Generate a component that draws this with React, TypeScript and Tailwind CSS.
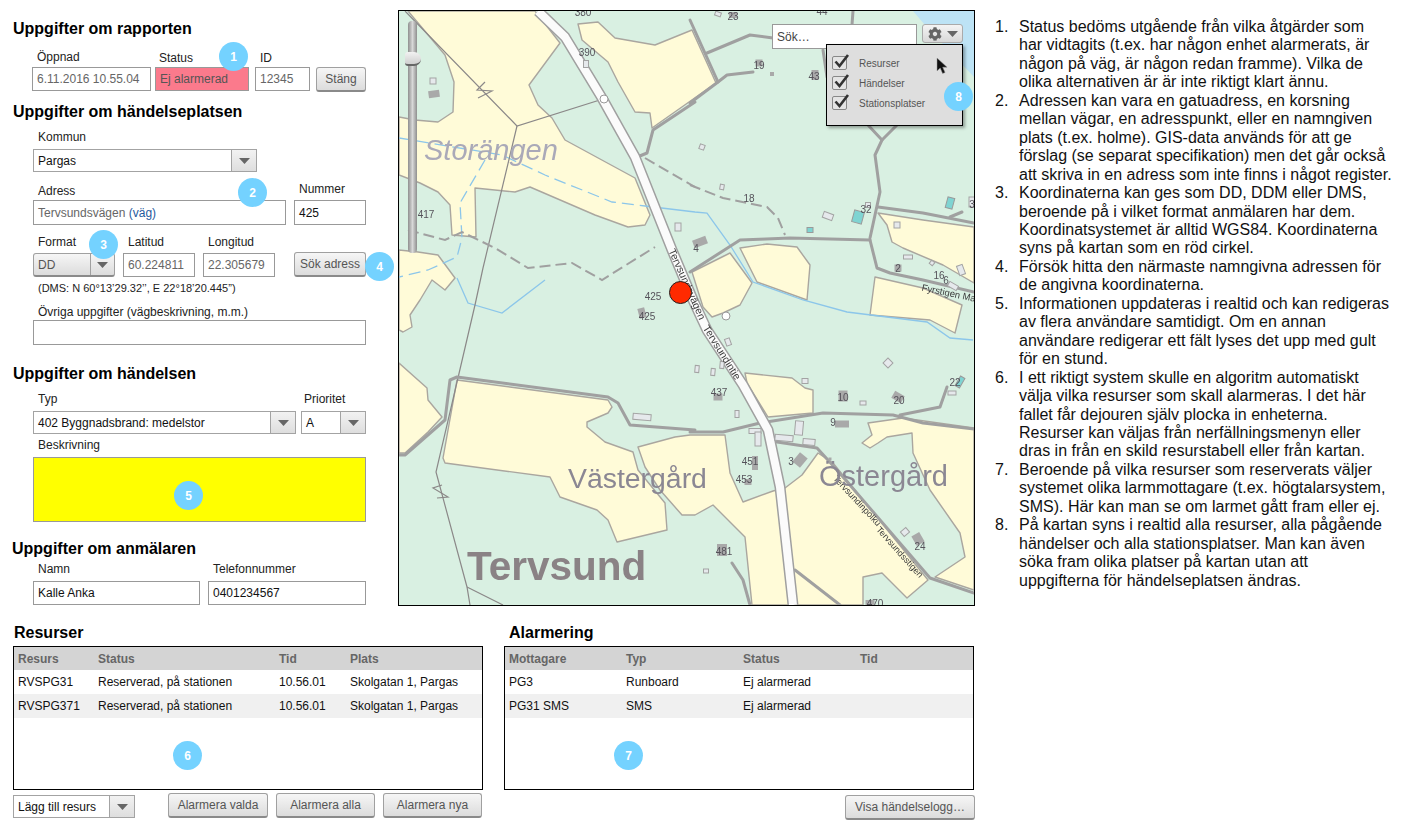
import React from 'react';
import { FaCog } from 'react-icons/fa';

const fields = [
  '408,11 445,55 454,82 453,112 438,122 415,120 399,117 399,175 420,183 438,192 450,205 452,235 476,237 475,188 515,192 530,187 595,215 628,227 645,225 650,215 635,178 565,140 552,118 538,105 529,85 560,43 535,11',
  '578,24 598,22 615,38 655,45 692,30 716,83 652,128 650,113 635,112 618,82 608,62 582,40',
  '399,250 418,252 438,255 455,278 445,290 432,280 420,300 410,315 412,327 403,332 399,330',
  '399,363 427,388 428,400 442,417 428,432 405,453 399,453',
  '457,380 608,400 612,407 608,413 587,422 587,427 605,442 633,452 638,470 665,503 667,530 617,542 608,520 597,510 560,497 550,477 445,463 443,458',
  '638,447 675,437 690,435 725,435 730,473 743,502 773,491 785,488 802,475 818,453 833,463 928,580 907,598 882,573 863,577 863,605 752,605 745,537 713,505 695,515 682,515 660,490 645,467',
  '868,423 903,418 974,428 974,590 935,577 965,557 960,533 930,490 913,453 912,433 887,437 878,443 870,448 862,443 872,435',
  '745,373 792,378 805,388 813,390 813,413 768,417 747,383',
  '692,272 730,253 752,283 740,305 723,313 712,317 703,307',
  '740,248 767,244 797,247 810,265 807,300 757,282',
  '878,213 923,220 974,227 974,283 943,265 903,248 892,242 887,225',
  '875,277 923,288 962,305 955,333 930,320 870,315',
];

const roads = [
  '707,53 750,35 773,38',
  '690,20 718,82',
  '690,103 718,82 727,75 753,72',
  '853,11 852,25',
  '823,50 827,77',
  '868,125 882,140 897,125',
  '882,140 875,155 880,192 870,238',
  '878,207 923,213 974,223',
  '950,217 962,212',
  '690,272 740,240 790,238 870,240',
  '870,240 877,268 890,273 923,280 974,292',
  '635,158 647,153 653,130 695,102',
  '399,455 405,455 445,420 450,380 457,377 608,397 618,403 630,425 695,430',
  '690,432 723,432 760,423 823,413 893,415 923,423 974,429',
  '900,415 940,407 947,387',
  '777,442 817,448 837,470 930,578 974,593',
  '732,563 743,580 750,605',
  '795,570 840,605',
];

const tracks = [
  '645,158 695,187',
  '690,185 723,198 767,207 778,218 785,235',
  '408,230 445,240 462,232 495,248 528,268 572,263 602,280 655,247',
];

const powerLines = [
  '405,11 517,126 603,99',
  '517,126 483,268 475,305 436,472 467,587 470,605',
  '467,587 503,605',
  '485,82 477,90 492,91 478,98',
  '442,485 433,488 448,497 437,498',
];

const streams = [
  { points: '399,138 502,155 545,175 612,202 645,206', dashed: true },
  { points: '485,160 460,203 462,238 457,257 428,270 399,277', dashed: true },
  { points: '645,206 695,212 707,213 730,245 753,282 803,300 847,312 927,322 950,338 973,340', dashed: false },
  { points: '457,278 468,303 502,313 545,280', dashed: false },
];

type Kind = 'gray' | 'pale' | 'teal';

const buildings: [number, number, number, number, number, Kind][] = [
  [433, 81, 6, 6, 0, 'pale'],
  [434, 94, 11, 7, -8, 'gray'],
  [586, 64, 5, 7, 0, 'pale'],
  [678, 227, 6, 8, 0, 'pale'],
  [718, 14, 6, 4, 20, 'pale'],
  [733, 15, 8, 6, 0, 'gray'],
  [759, 63, 7, 7, 0, 'gray'],
  [772, 74, 4, 4, 0, 'gray'],
  [815, 75, 7, 10, 0, 'gray'],
  [702, 147, 5, 5, 20, 'pale'],
  [722, 187, 4, 5, 10, 'pale'],
  [828, 216, 10, 6, 20, 'pale'],
  [858, 217, 10, 12, 15, 'teal'],
  [810, 230, 6, 5, 0, 'teal'],
  [868, 205, 5, 5, 0, 'pale'],
  [950, 203, 7, 11, 15, 'teal'],
  [972, 202, 6, 10, 0, 'pale'],
  [700, 242, 14, 8, -20, 'gray'],
  [897, 225, 6, 6, 0, 'pale'],
  [908, 257, 9, 4, 0, 'pale'],
  [932, 263, 4, 4, 40, 'pale'],
  [961, 270, 6, 10, -20, 'pale'],
  [953, 286, 10, 5, 30, 'pale'],
  [898, 268, 7, 7, 0, 'gray'],
  [642, 417, 18, 6, 5, 'pale'],
  [642, 313, 7, 10, -15, 'gray'],
  [728, 342, 5, 7, -20, 'pale'],
  [697, 369, 4, 7, 5, 'pale'],
  [713, 372, 4, 7, 5, 'pale'],
  [722, 365, 4, 7, 5, 'pale'],
  [805, 381, 6, 5, 0, 'pale'],
  [888, 363, 7, 7, 45, 'pale'],
  [737, 414, 4, 7, 0, 'pale'],
  [718, 397, 9, 7, 0, 'gray'],
  [843, 396, 9, 11, 0, 'gray'],
  [863, 403, 6, 4, 0, 'pale'],
  [898, 397, 11, 8, 30, 'gray'],
  [960, 382, 5, 11, 30, 'teal'],
  [952, 393, 8, 4, 0, 'pale'],
  [842, 424, 14, 7, 0, 'gray'],
  [799, 428, 8, 14, 5, 'pale'],
  [784, 438, 18, 6, 5, 'pale'],
  [809, 442, 12, 6, 5, 'pale'],
  [755, 431, 12, 5, 0, 'pale'],
  [758, 439, 6, 14, 0, 'pale'],
  [755, 463, 6, 14, 0, 'gray'],
  [748, 482, 7, 6, 0, 'gray'],
  [800, 460, 10, 12, 40, 'gray'],
  [905, 532, 7, 6, -40, 'pale'],
  [918, 539, 9, 11, -30, 'gray'],
  [722, 550, 10, 12, 0, 'gray'],
  [706, 571, 5, 4, 0, 'pale'],
  [870, 603, 9, 6, 0, 'gray'],
  [830, 459, 3, 3, 0, 'gray'],
];

const buildingStyle: Record<Kind, string> = {
  gray: 'fill-[#a9a9a9]',
  pale: 'fill-[#e6e9ec] stroke-[#a3a3a3]',
  teal: 'fill-[#7fd4d2] stroke-[#9a9a9a]',
};

const numbers: [string, number, number][] = [
  ['380', 583, 16],
  ['390', 587, 56],
  ['417', 426, 218],
  ['23', 733, 20],
  ['44', 822, 15],
  ['19', 759, 69],
  ['43', 814, 80],
  ['18', 749, 202],
  ['32', 866, 213],
  ['4', 696, 252],
  ['2', 898, 272],
  ['16', 939, 279],
  ['6', 946, 284],
  ['3', 972, 208],
  ['437', 719, 396],
  ['10', 843, 401],
  ['20', 899, 404],
  ['22', 955, 386],
  ['9', 833, 426],
  ['451', 750, 465],
  ['3', 791, 465],
  ['453', 744, 483],
  ['481', 724, 555],
  ['24', 920, 550],
  ['470', 875, 607],
  ['425', 653, 300],
  ['425', 647, 320],
];

const roadNames: [string, number, number, number, number][] = [
  ['Tervsundsvägen', 672, 249, 66, 10.5],
  ['Tervsundintie', 706, 326, 58, 10.5],
  ['Tervsundinpolku', 835, 477, 47, 9],
  ['Tervsundsstigen', 878, 528, 48, 9],
  ['Fyrstigen Maja', 922, 287, 12, 9.5],
];

const roadLine = '538,11 565,37 602,98 635,157 672,250 693,300 707,330 743,385 768,430 780,487 793,605';

const notes = [
  [
    'Status bedöms utgående från vilka åtgärder som',
    'har vidtagits (t.ex. har någon enhet alarmerats, är',
    'någon på väg, är någon redan framme). Vilka de',
    'olika alternativen är är inte riktigt klart ännu.',
  ],
  [
    'Adressen kan vara en gatuadress, en korsning',
    'mellan vägar, en adresspunkt, eller en namngiven',
    'plats (t.ex. holme). GIS-data används för att ge',
    'förslag (se separat specifikation) men det går också',
    'att skriva in en adress som inte finns i något register.',
  ],
  [
    'Koordinaterna kan ges som DD, DDM eller DMS,',
    'beroende på i vilket format anmälaren har dem.',
    'Koordinatsystemet är alltid WGS84. Koordinaterna',
    'syns på kartan som en röd cirkel.',
  ],
  ['Försök hitta den närmaste namngivna adressen för', 'de angivna koordinaterna.'],
  [
    'Informationen uppdateras i realtid och kan redigeras',
    'av flera användare samtidigt. Om en annan',
    'användare redigerar ett fält lyses det upp med gult',
    'för en stund.',
  ],
  [
    'I ett riktigt system skulle en algoritm automatiskt',
    'välja vilka resurser som skall alarmeras. I det här',
    'fallet får dejouren själv plocka in enheterna.',
    'Resurser kan väljas från nerfällningsmenyn eller',
    'dras in från en skild resurstabell eller från kartan.',
  ],
  [
    'Beroende på vilka resurser som reserverats väljer',
    'systemet olika larmmottagare (t.ex. högtalarsystem,',
    'SMS). Här kan man se om larmet gått fram eller ej.',
  ],
  [
    'På kartan syns i realtid alla resurser, alla pågående',
    'händelser och alla stationsplatser. Man kan även',
    'söka fram olika platser på kartan utan att',
    'uppgifterna för händelseplatsen ändras.',
  ],
];

function Heading({ children, className = '' }: { children: React.ReactNode; className?: string }) {
  return <h2 className={`h-[18px] text-[16px] leading-[18px] font-bold text-black ${className}`}>{children}</h2>;
}

function Field({
  label,
  className = '',
  labelClass = 'h-5',
  children,
}: {
  label: string;
  className?: string;
  labelClass?: string;
  children: React.ReactNode;
}) {
  return (
    <div className={className}>
      <div className={`pl-[5px] text-xs leading-4 text-[#222] ${labelClass}`}>{label}</div>
      {children}
    </div>
  );
}

function Input({ value, className = 'bg-white' }: { value?: React.ReactNode; className?: string }) {
  return (
    <div className={`flex items-center border border-[#999] pl-[4px] text-xs whitespace-nowrap ${className}`}>
      {value}
    </div>
  );
}

function Arrow() {
  return (
    <svg width="11" height="6" viewBox="0 0 11 6">
      <path d="M0 0h11L5.5 6z" fill="#666" />
    </svg>
  );
}

function Select({ value, className = '' }: { value: string; className?: string }) {
  return (
    <div className={`flex border border-[#a3a3a3] bg-white text-xs text-[#111] ${className}`}>
      <div className="flex flex-1 items-center pl-[4px] whitespace-nowrap">{value}</div>
      <div className="flex w-[25px] items-center justify-center border-l border-[#a3a3a3] bg-gradient-to-b from-[#f2f2f2] to-[#dedede]">
        <Arrow />
      </div>
    </div>
  );
}

function Btn({ children, className = '' }: { children: React.ReactNode; className?: string }) {
  return (
    <div
      className={`flex items-center justify-center rounded-[3px] border border-[#a0a0a0] border-b-2 border-b-[#8a8a8a] bg-gradient-to-b from-[#f6f6f6] to-[#dcdcdc] text-xs text-[#555] whitespace-nowrap ${className}`}
    >
      {children}
    </div>
  );
}

function Badge({ n, className }: { n: number; className: string }) {
  return (
    <div className={`absolute flex h-[29px] w-[29px] items-center justify-center rounded-full bg-[#74d2ff] text-xs font-bold text-white ${className}`}>
      {n}
    </div>
  );
}

function MapCanvas() {
  return (
    <svg viewBox="399 11 575 594" className="block h-full w-full bg-[#d9f0e2] blur-[0.4px]">
      <polygon points="913,11 925,25 974,77 974,11" fill="#bde3f5" />
      {fields.map((points) => (
        <polygon key={points} points={points} fill="#fffbd8" stroke="#aaa69f" strokeWidth="1.4" strokeLinejoin="round" />
      ))}
      {streams.map((s) => (
        <polyline
          key={s.points}
          points={s.points}
          fill="none"
          stroke="#8cc6ea"
          strokeWidth="1.3"
          strokeDasharray={s.dashed ? '12 6' : undefined}
        />
      ))}
      {powerLines.map((points) => (
        <polyline key={points} points={points} fill="none" stroke="#8b8888" strokeWidth="1.2" />
      ))}
      {tracks.map((points) => (
        <polyline key={points} points={points} fill="none" stroke="#a0a0a0" strokeWidth="2" strokeDasharray="11 5" />
      ))}
      {roads.map((points) => (
        <polyline key={points} points={points} fill="none" stroke="#a0a0a0" strokeWidth="3" strokeLinejoin="round" strokeLinecap="round" />
      ))}
      <polyline points={roadLine} fill="none" stroke="#a0a0a0" strokeWidth="11" strokeLinejoin="round" />
      <polyline points={roadLine} fill="none" stroke="#fbfbfb" strokeWidth="8" strokeLinejoin="round" />
      {buildings.map(([cx, cy, w, h, rot, kind], i) => (
        <rect
          key={i}
          x={cx - w / 2}
          y={cy - h / 2}
          width={w}
          height={h}
          transform={`rotate(${rot} ${cx} ${cy})`}
          className={buildingStyle[kind]}
          strokeWidth="1"
        />
      ))}
      {numbers.map(([t, x, y], i) => (
        <text key={i} x={x} y={y} textAnchor="middle" fontSize="10" fill="#55525a">
          {t}
        </text>
      ))}
      {roadNames.map(([t, x, y, rot, size]) => (
        <text key={t} x={x} y={y} fontSize={size} fill="#3c3c3c" dominantBaseline="central" transform={`rotate(${rot} ${x} ${y})`}>
          {t}
        </text>
      ))}
      <text x="424" y="160" fontSize="29" fontStyle="italic" fill="#aaa9b8">
        Storängen
      </text>
      <text x="568" y="488" fontSize="28.4" fill="#8b8793">
        Västergård
      </text>
      <text x="819" y="486" fontSize="29" fill="#8b8793">
        Östergård
      </text>
      <text x="467" y="580" fontSize="40.5" fontWeight="bold" fill="#8a8285">
        Tervsund
      </text>
      <circle cx="604" cy="99" r="4" fill="#fff" stroke="#999" />
      <circle cx="726" cy="316" r="4" fill="#fff" stroke="#999" />
    </svg>
  );
}

function CheckRow({ label }: { label: string }) {
  return (
    <div className="flex h-[20px] items-center">
      <div className="relative h-[14px] w-[15px] rounded-[2px] border border-[#888] bg-[#e4e4e4]">
        <svg className="absolute -top-[5px] left-0" width="18" height="18" viewBox="0 0 18 18">
          <path d="M2.5 9.5L6.5 14L15 3" fill="none" stroke="#333" strokeWidth="2.6" />
        </svg>
      </div>
      <span className="ml-[12px] text-[10px] text-[#555]">{label}</span>
    </div>
  );
}

function Table({ grid, head, rows }: { grid: string; head: string[]; rows: string[][] }) {
  return (
    <div className="h-[144px] border border-black bg-white text-xs">
      <div className={`grid h-[23px] items-center bg-[#d4d4d4] pl-[4px] font-bold text-[#666] ${grid}`}>
        {head.map((h) => (
          <div key={h}>{h}</div>
        ))}
      </div>
      {rows.map((row, i) => (
        <div key={i} className={`grid h-[24px] items-center pl-[4px] text-[#111] ${grid} ${i % 2 ? 'bg-[#f0f0f0]' : 'bg-white'}`}>
          {row.map((c, j) => (
            <div key={j} className="whitespace-nowrap">
              {c}
            </div>
          ))}
        </div>
      ))}
    </div>
  );
}

export default function App() {
  return (
    <div className="relative h-[823px] w-[1403px] overflow-hidden bg-white font-['Liberation_Sans',Arial,sans-serif]">
      <div className="flex h-[624px] items-start">
        <div className="w-[398px] pl-[33px] pt-[20px]">
          <Heading className="-ml-[20px]">Uppgifter om rapporten</Heading>
          <div className="-ml-[1px] mt-[11px] flex h-[42px]">
            <Field label="Öppnad" className="w-[119px]" labelClass="h-[18px]">
              <Input value="6.11.2016 10.55.04" className="h-[24px] bg-white text-[#666]" />
            </Field>
            <Field label="Status" className="ml-[4px] w-[94px]" labelClass="-ml-[1px] h-[18px] pt-[1px]">
              <Input value="Ej alarmerad" className="h-[24px] bg-[#fb7a8c] text-[#555]" />
            </Field>
            <Field label="ID" className="ml-[6px] w-[55px]" labelClass="h-[18px] pt-[1px]">
              <Input value="12345" className="h-[24px] bg-white text-[#666]" />
            </Field>
            <Btn className="ml-[6px] mt-[18px] h-[25px] w-[50px]">Stäng</Btn>
          </div>

          <Heading className="-ml-[20px] mt-[12px]">Uppgifter om händelseplatsen</Heading>
          <Field label="Kommun" className="mt-[8px] w-[224px]">
            <Select value="Pargas" className="h-[23px]" />
          </Field>
          <div className="mt-[8px] flex">
            <Field label="Adress" className="w-[253px]" labelClass="h-5 pt-[3px]">
              <Input
                className="h-[25px] bg-white text-[#666]"
                value={
                  <>
                    Tervsundsvägen&nbsp;<span className="text-[#1f5a9e]">(väg)</span>
                  </>
                }
              />
            </Field>
            <Field label="Nummer" className="ml-[8px] w-[72px]" labelClass="h-5 pt-[1px]">
              <Input value="425" className="h-[25px] bg-white text-[#111]" />
            </Field>
          </div>
          <div className="mt-[8px] flex">
            <Field label="Format" className="w-[82px]" labelClass="h-5 pt-[1px]">
              <div className="flex h-[24px] rounded-[3px] border border-[#a0a0a0] border-b-2 border-b-[#8a8a8a] bg-gradient-to-b from-[#f6f6f6] to-[#dcdcdc] text-xs text-[#555]">
                <div className="flex flex-1 items-center pl-[4px]">DD</div>
                <div className="flex w-[24px] items-center justify-center border-l border-[#a0a0a0]">
                  <Arrow />
                </div>
              </div>
            </Field>
            <Field label="Latitud" className="ml-[8px] w-[72px]" labelClass="h-5 pt-[1px]">
              <Input value="60.224811" className="h-[24px] bg-white text-[#666]" />
            </Field>
            <Field label="Longitud" className="ml-[8px] w-[72px]" labelClass="h-5 pt-[1px]">
              <Input value="22.305679" className="h-[24px] bg-white text-[#666]" />
            </Field>
            <Btn className="ml-[19px] mt-[19px] h-[25px] w-[72px]">Sök adress</Btn>
          </div>
          <div className="mt-[4px] h-[14px] pl-[5px] text-[11px] leading-[14px] text-[#222]">
            (DMS: N 60°13’29.32’’, E 22°18’20.445”)
          </div>
          <Field label="Övriga uppgifter (vägbeskrivning, m.m.)" className="mt-[9px] w-[333px]" labelClass="h-4">
            <Input className="h-[25px] bg-white" />
          </Field>

          <Heading className="-ml-[20px] mt-[20px]">Uppgifter om händelsen</Heading>
          <div className="mt-[8px] flex">
            <Field label="Typ" className="w-[263px]">
              <Select value="402 Byggnadsbrand: medelstor" className="h-[23px]" />
            </Field>
            <Field label="Prioritet" className="ml-[5px] w-[65px]" labelClass="h-5 -ml-[2px]">
              <Select value="A" className="h-[23px]" />
            </Field>
          </div>
          <Field label="Beskrivning" className="mt-[3px] w-[333px]">
            <div className="h-[65px] border border-[#999] bg-[#ffff00]" />
          </Field>

          <Heading className="-ml-[21px] mt-[18px]">Uppgifter om anmälaren</Heading>
          <div className="mt-[3px] flex">
            <Field label="Namn" className="w-[167px]">
              <Input value="Kalle Anka" className="h-[24px] bg-white text-[#111]" />
            </Field>
            <Field label="Telefonnummer" className="ml-[8px] w-[158px]">
              <Input value="0401234567" className="h-[24px] bg-white text-[#111]" />
            </Field>
          </div>
        </div>

        <div className="relative mt-[10px] h-[596px] w-[577px] shrink-0 border border-black">
          <MapCanvas />
          {/* marker stays sharp, the rest of the map is slightly soft */}
          <div className="absolute left-[270px] top-[270px] h-[23px] w-[23px] rounded-full border border-[#222] bg-[#ff2a00]" />
          {/* slider */}
          <div className="absolute left-[9px] top-[10px] h-[232px] w-[9px] rounded-[4px] bg-gradient-to-r from-[#8f8f8f] via-[#d8d8d8] to-[#8f8f8f]" />
          <div className="absolute left-[6px] top-[41px] h-[14px] w-[16px] rounded-r-[7px] rounded-l-[3px] border-b-2 border-b-[#666] bg-gradient-to-b from-[#f2f2f2] to-[#cfcfcf]" />
          {/* search */}
          <div className="absolute left-[373px] top-[13px] flex h-[25px] w-[145px] items-center border border-[#999] bg-white pl-[4px] text-[12px] text-[#444]">
            Sök…
          </div>
          <div className="absolute left-[523px] top-[13px] flex h-[19px] w-[41px] items-center justify-center gap-[5px] rounded-[3px] border border-[#aaa] bg-gradient-to-b from-[#f4f4f4] to-[#d8d8d8]">
            <FaCog className="h-[14px] w-[14px] text-[#666]" />
            <Arrow />
          </div>
          <div className="absolute left-[427px] top-[33px] h-[82px] w-[137px] border border-black bg-[#dedede] pl-[5px] pt-[8px] shadow-[2px_2px_3px_rgba(0,0,0,0.35)]">
            <CheckRow label="Resurser" />
            <CheckRow label="Händelser" />
            <CheckRow label="Stationsplatser" />
            <svg className="absolute left-[109px] top-[12px]" width="13" height="18" viewBox="0 0 13 18">
              <path d="M1 1v13l3.2-3 2.4 5.5 2.5-1-2.4-5.3h4.4z" fill="#111" stroke="#999" strokeWidth="0.5" />
            </svg>
          </div>
        </div>

        <ol className="ml-[20px] mt-[18px] text-[16px] leading-[18.45px] text-[#111]">
          {notes.map((lines, i) => (
            <li key={i} className="flex whitespace-nowrap">
              <span className="w-[24px] shrink-0">{i + 1}.</span>
              <div>
                {lines.map((l) => (
                  <div key={l}>{l}</div>
                ))}
              </div>
            </li>
          ))}
        </ol>
      </div>

      <div className="flex">
        <div className="ml-[13px] w-[470px]">
          <Heading className="ml-[1px]">Resurser</Heading>
          <div className="mt-[4px]">
            <Table
              grid="grid-cols-[80px_181px_71px_1fr]"
              head={['Resurs', 'Status', 'Tid', 'Plats']}
              rows={[
                ['RVSPG31', 'Reserverad, på stationen', '10.56.01', 'Skolgatan 1, Pargas'],
                ['RVSPG371', 'Reserverad, på stationen', '10.56.01', 'Skolgatan 1, Pargas'],
              ]}
            />
          </div>
          <div className="mt-[3px] flex items-start">
            <Select value="Lägg till resurs" className="mt-[2px] h-[23px] w-[122px]" />
            <div className="ml-auto flex gap-[8px] pr-[1px]">
              <Btn className="h-[25px] w-[100px]">Alarmera valda</Btn>
              <Btn className="h-[25px] w-[99px]">Alarmera alla</Btn>
              <Btn className="h-[25px] w-[99px]">Alarmera nya</Btn>
            </div>
          </div>
        </div>
        <div className="ml-[21px] w-[471px]">
          <Heading className="ml-[5px]">Alarmering</Heading>
          <div className="mt-[4px] w-[470px]">
            <Table
              grid="grid-cols-[117px_117px_117px_1fr]"
              head={['Mottagare', 'Typ', 'Status', 'Tid']}
              rows={[
                ['PG3', 'Runboard', 'Ej alarmerad', ''],
                ['PG31 SMS', 'SMS', 'Ej alarmerad', ''],
              ]}
            />
          </div>
          <div className="mt-[5px] flex justify-end">
            <Btn className="h-[25px] w-[130px]">Visa händelselogg…</Btn>
          </div>
        </div>
      </div>

      <Badge n={1} className="left-[219px] top-[42px]" />
      <Badge n={2} className="left-[238px] top-[178px]" />
      <Badge n={3} className="left-[89px] top-[230px]" />
      <Badge n={4} className="left-[365px] top-[252px]" />
      <Badge n={5} className="left-[174px] top-[481px]" />
      <Badge n={6} className="left-[173px] top-[741px]" />
      <Badge n={7} className="left-[614px] top-[741px]" />
      <Badge n={8} className="left-[944px] top-[82px]" />
    </div>
  );
}
